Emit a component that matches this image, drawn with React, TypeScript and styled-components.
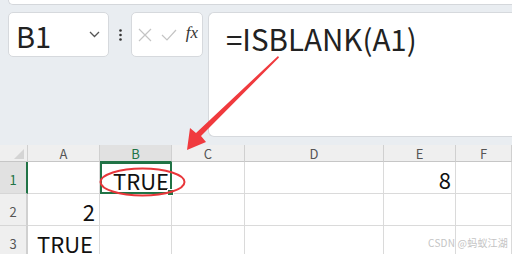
import styled, { createGlobalStyle } from "styled-components"

const Global = createGlobalStyle`
  html, body {
    margin: 0;
    padding: 0;
    width: 512px;
    height: 254px;
    overflow: hidden;
    background: #e9edf1;
    font-family: "Noto Sans CJK SC", "Noto Sans", sans-serif;
  }
`

const Page = styled.div`
  position: relative;
  width: 512px;
  height: 254px;
  overflow: hidden;
`

const TopStrip = styled.div`
  height: 4px;
  margin-left: 8px;
  background: #fff;
  border-left: 1px solid #d4d7db;
  border-bottom: 1px solid #d4d7db;
  border-bottom-left-radius: 6px;
`

const Bar = styled.div`
  display: flex;
  align-items: flex-start;
  padding: 7px 0 8px 8px;
  height: 125px;
`

const Box = styled.div`
  display: flex;
  align-items: center;
  box-sizing: border-box;
  height: 45px;
  background: #fff;
  border: 1px solid #d6d9dd;
  border-radius: 5px;
`

const NameBox = styled(Box)`
  width: 101px;
  padding: 0 8px 0 7px;
  justify-content: space-between;
  font-size: 29px;
  color: #222;
`

const Dots = styled.div`
  width: 22px;
  height: 45px;
  display: flex;
  align-items: center;
  justify-content: center;
`

const FnBox = styled(Box)`
  width: 72px;
  padding: 0 4px 0 6px;
  justify-content: space-between;
`

const FxText = styled.span`
  font-family: "Liberation Serif", serif;
  font-style: italic;
  font-size: 17px;
  color: #333;
  margin-bottom: 3px;
`

const FormulaBox = styled.div`
  flex: 1;
  margin-left: 5px;
  height: 125px;
  box-sizing: border-box;
  background: #fff;
  border: 1px solid #d6d9dd;
  border-right: none;
  border-radius: 6px 0 0 6px;
  padding: 6px 0 0 17px;
  font-size: 29.5px;
  line-height: 38px;
  color: #222;
`

const Grid = styled.div`
  display: grid;
  grid-template-columns: 28px 72px 72px 73px 139px 72px 56px;
  grid-template-rows: 17px 32px 32px 32px;
  background: #fff;
`

const Corner = styled.div`
  position: relative;
  background: #efefef;
  border-right: 1px solid #d0d0d0;
  border-bottom: 1px solid #c6c6c6;
  box-sizing: border-box;
  &::after {
    content: "";
    position: absolute;
    right: 3px;
    bottom: 2px;
    border-left: 10px solid transparent;
    border-bottom: 10px solid #d4d4d4;
  }
`

const ColHead = styled.div<{ $active?: boolean }>`
  box-sizing: border-box;
  display: flex;
  align-items: center;
  justify-content: center;
  background: ${p => (p.$active ? "#e1e1e1" : "#efefef")};
  border-right: 1px solid #d0d0d0;
  border-bottom: 1px solid ${p => (p.$active ? "#217346" : "#c6c6c6")};
  font-size: 13px;
  color: ${p => (p.$active ? "#217346" : "#555")};
  line-height: 1;
`

const RowHead = styled.div<{ $active?: boolean }>`
  box-sizing: border-box;
  display: flex;
  align-items: center;
  justify-content: center;
  padding-top: 4px;
  background: ${p => (p.$active ? "#e1e1e1" : "#efefef")};
  border-right: 2px solid ${p => (p.$active ? "#217346" : "#d0d0d0")};
  border-bottom: 1px solid #d6d6d6;
  font-size: 13px;
  color: ${p => (p.$active ? "#217346" : "#555")};
`

const Cell = styled.div<{ $align?: "left" | "right" }>`
  box-sizing: border-box;
  display: flex;
  align-items: center;
  justify-content: ${p => (p.$align === "right" ? "flex-end" : "flex-start")};
  padding: 3px 4px 0 9px;
  border-right: 1px solid #dadada;
  border-bottom: 1px solid #dadada;
  font-size: 22px;
  color: #111;
`

const Selected = styled(Cell)`
  position: relative;
  border: 2px solid #217346;
  padding-left: 11px;
  &::after {
    content: "";
    position: absolute;
    right: -4px;
    bottom: -4px;
    width: 5px;
    height: 5px;
    background: #217346;
    border: 1px solid #fff;
  }
`

const Mark = styled.svg`
  position: absolute;
  left: 0;
  top: 0;
  pointer-events: none;
`

const Watermark = styled.div`
  position: absolute;
  right: 4px;
  bottom: 4px;
  font-size: 10px;
  color: #c4c4c4;
  letter-spacing: 0.2px;
`

const cols = ["A", "B", "C", "D", "E", "F"]

const rows: { a?: string; b?: string; e?: string; aRight?: boolean }[] = [
  { b: "TRUE", e: "8" },
  { a: "2", aRight: true },
  { a: "TRUE" },
]

export default function App() {
  return (
    <Page>
      <Global />
      <TopStrip />
      <Bar>
        <NameBox>
          <span>B1</span>
          <svg width="11" height="7" viewBox="0 0 11 7">
            <path d="M1 1l4.5 4.5L10 1" fill="none" stroke="#555" strokeWidth="1.3" />
          </svg>
        </NameBox>
        <Dots>
          <svg width="3" height="12" viewBox="0 0 3 12">
            <circle cx="1.5" cy="1.5" r="1.3" fill="#333" />
            <circle cx="1.5" cy="6" r="1.3" fill="#333" />
            <circle cx="1.5" cy="10.5" r="1.3" fill="#333" />
          </svg>
        </Dots>
        <FnBox>
          <svg width="14" height="14" viewBox="0 0 14 14">
            <path d="M1 1l12 12M13 1L1 13" stroke="#c4c4c4" strokeWidth="1.2" />
          </svg>
          <svg width="16" height="12" viewBox="0 0 16 12">
            <path d="M1 6l5 5L15 1" fill="none" stroke="#c4c4c4" strokeWidth="1.2" />
          </svg>
          <FxText>fx</FxText>
        </FnBox>
        <FormulaBox>=ISBLANK(A1)</FormulaBox>
      </Bar>
      <Grid>
        <Corner />
        {cols.map(c => (
          <ColHead key={c} $active={c === "B"}>
            {c}
          </ColHead>
        ))}

        {rows.map((r, i) => [
          <RowHead key={`h${i}`} $active={i === 0}>
            {i + 1}
          </RowHead>,
          <Cell key={`a${i}`} $align={r.aRight ? "right" : "left"}>
            {r.a}
          </Cell>,
          i === 0 ? (
            <Selected key={`b${i}`}>{r.b}</Selected>
          ) : (
            <Cell key={`b${i}`}>{r.b}</Cell>
          ),
          <Cell key={`c${i}`} />,
          <Cell key={`d${i}`} />,
          <Cell key={`e${i}`} $align="right">
            {r.e}
          </Cell>,
          <Cell key={`f${i}`} />,
        ])}
      </Grid>

      <Mark width="512" height="254" viewBox="0 0 512 254">
        <ellipse cx="142.5" cy="182" rx="42" ry="13.5" fill="none" stroke="#e8363a" strokeWidth="2" />
        <path d="M278 56 L279 57.5 L201 136 L206 142 L187 150 L190 128 L196 133 Z" fill="#f03a3e" />
      </Mark>
      <Watermark>CSDN @蚂蚁江湖</Watermark>
    </Page>
  )
}
